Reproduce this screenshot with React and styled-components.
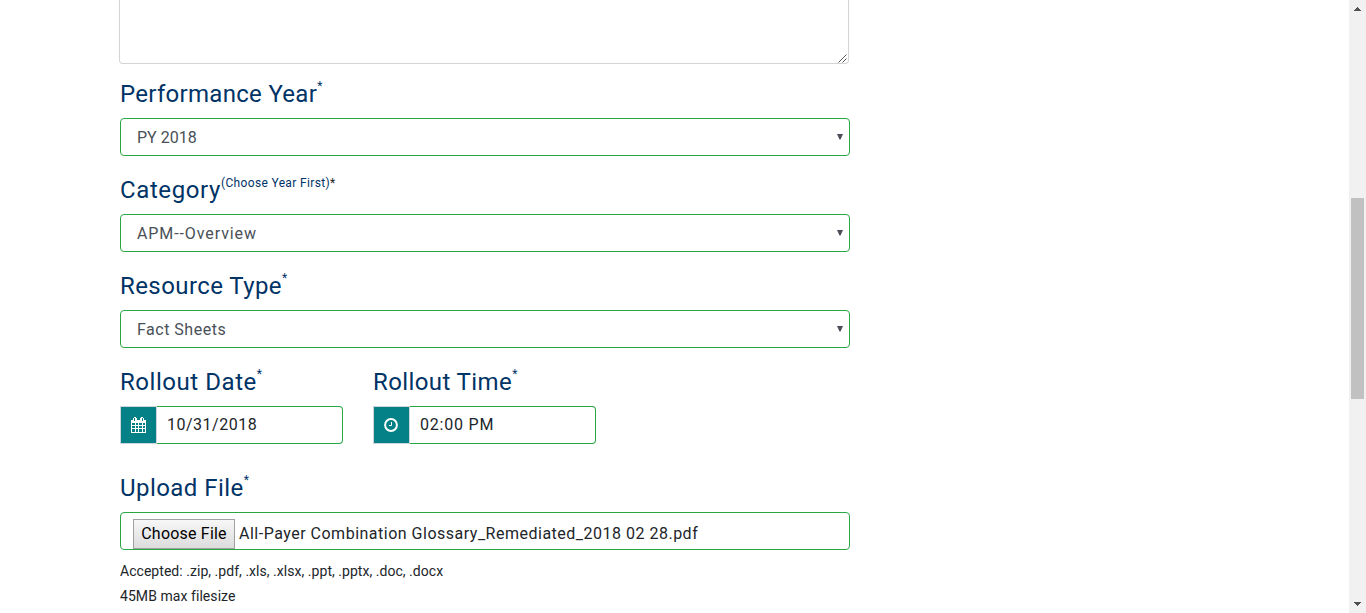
import React from "react";
import styled, { createGlobalStyle } from "styled-components";

const Global = createGlobalStyle`
  * { box-sizing: border-box; }
  html, body { margin: 0; background: #fff; overflow: hidden; }
  body { font-family: Roboto, "Liberation Sans", sans-serif; color: #212529; }
`;
const Page = styled.div`display: flex; height: 613px; overflow: hidden;`;
const Main = styled.main`flex: 1; padding-left: 120px;`;
const Form = styled.form`width: 730px;`;
const TextArea = styled.div`
  width: 730px; height: 64px; margin: 0 0 12px -1px;
  display: flex; justify-content: flex-end; align-items: flex-end;
  border: 1px solid #d4d4d6; border-top: 0; border-radius: 0 0 4px 4px;
  svg { display: block; margin: 0 1px 0 0; }
`;
const Group = styled.div`
  width: ${p => p.$w || "100%"}; margin-bottom: ${p => p.$gap ?? 16}px;
`;
const Label = styled.label`
  display: flex; height: 42px; line-height: 36px; font-size: 24px;
  color: #003366; white-space: nowrap;
`;
const Txt = styled.span`letter-spacing: ${p => p.$ls || 0}px; white-space: pre;`;
const Sup = styled.sup`
  font-size: 12px; line-height: 12px; margin-top: ${p => p.$top ?? 4}px;
  letter-spacing: ${p => p.$ls || 0}px;
`;
const Required = styled.span`color: #212529;`;
const Field = styled.div`
  display: flex; align-items: center; justify-content: space-between;
  height: 38px; padding: 0 5px 0 16px; border: 1px solid #28a745; border-radius: 4px;
  font-size: 16px; line-height: 36px; color: #495057;
  span { padding-top: 2px; }
  svg { display: block; }
`;
const Row = styled.div`display: flex; gap: 30px;`;
const InputGroup = styled.div`display: flex; height: 38px;`;
const Addon = styled.div`
  width: 37px; display: flex; align-items: center; justify-content: center;
  background: #048186; border: 1px solid #ced4da;
`;
const Input = styled.div`
  flex: 1; padding-left: 10px; border: 1px solid #28a745; border-left: 0;
  border-radius: 0 4px 4px 0; font-size: 16px; line-height: 35px; color: #212529;
`;
const FileField = styled.div`
  display: flex; height: 38px; padding: 6px 12px 0; overflow: hidden;
  border: 1px solid #28a745; border-radius: 4px; font-size: 16px; line-height: 29px;
`;
const FileButton = styled.span`
  display: block; width: 102px; height: 30px; margin-right: 4px; text-align: center;
  border: 1px solid #a0a0a0; background: linear-gradient(#f7f7f7, #dcdcdc);
  color: #000; line-height: 27px;
`;
const Hint = styled.div`
  height: 25px; line-height: 25px; font-size: 14px; white-space: nowrap;
`;
const Hints = styled.div`margin-top: 9px;`;
const Bar = styled.div`
  width: 17px; height: 613px; background: #f1f1f1; display: flex;
  flex-direction: column; align-items: center;
  svg { display: block; margin-top: 7px; }
`;
const Thumb = styled.div`width: 13px; height: 201px; margin: 187px 0 196px; background: #c1c1c1;`;

const Arrow = () => (
  <svg width="8" height="8" viewBox="0 0 8 8"><path d="M1 1h6L4.5 6.5h-1z" fill="#495057" /></svg>
);
const Calendar = () => (
  <svg width="15" height="16" viewBox="0 0 15 16" shapeRendering="crispEdges">
    <path fill="#fff" fillRule="evenodd" d="M0 3h2V1h1V0h2v1h1v2h3V1h1V0h2v1h1v2h2v13H0zM1 6v2h3V6zM5 6v2h2V6zM8 6v2h3V6zM12 6v2h2V6zM1 9v2h3V9zM5 9v2h2V9zM8 9v2h3V9zM12 9v2h2V9zM1 12v3h3v-3zM5 12v3h2v-3zM8 12v3h3v-3zM12 12v3h2v-3zM3 1v3h1V1zM11 1v3h1V1z" />
  </svg>
);
const Clock = () => (
  <svg width="15" height="14" viewBox="0 0 15 14" fill="none" stroke="#fff">
    <circle cx="7" cy="7" r="5.9" strokeWidth="2" /><path d="M7.5 4v3.5H5" />
  </svg>
);

const Select = ({ label, ls, value, vls, sup = "*", supLs, supTop }) => (
  <Group>
    <Label><Txt $ls={ls}>{label}</Txt><Sup $ls={supLs} $top={supTop}>{sup}</Sup></Label>
    <Field><Txt $ls={vls}>{value}</Txt><Arrow /></Field>
  </Group>
);

export default function App() {
  return (
    <Page>
      <Global />
      <Main>
        <Form>
          <TextArea>
            <svg width="9" height="9" viewBox="0 0 9 9" stroke="#555" fill="none"><path d="M.5 8.5l8-8M4.5 8.5l4-4" /></svg>
          </TextArea>
          <Select label="Performance Year" ls={0.3} value="PY 2018" vls={0} />
          <Select label="Category" ls={0.6} value="APM--Overview" vls={0.9} sup={<>(Choose Year First)<Required>*</Required></>} supLs={0.35} supTop={5} />
          <Select label="Resource Type" ls={0.42} value="Fact Sheets" vls={0.5} />
          <Row>
            <Group $w="223px" $gap={26}>
              <Label><Txt $ls={0.55}>Rollout Date</Txt><Sup>*</Sup></Label>
              <InputGroup><Addon><Calendar /></Addon><Input><Txt $ls={0.5}>10/31/2018</Txt></Input></InputGroup>
            </Group>
            <Group $w="223px" $gap={26}>
              <Label><Txt $ls={0.4}>Rollout Time</Txt><Sup>*</Sup></Label>
              <InputGroup><Addon><Clock /></Addon><Input><Txt $ls={0.8}>02:00 PM</Txt></Input></InputGroup>
            </Group>
          </Row>
          <Label><Txt $ls={0.45}>Upload File</Txt><Sup>*</Sup></Label>
          <FileField>
            <FileButton><Txt $ls={0.2}>Choose File</Txt></FileButton>
            <Txt $ls={0.5}>All-Payer Combination Glossary_Remediated_2018 02 28.pdf</Txt>
          </FileField>
          <Hints>
            <Hint><Txt $ls={0.04}>Accepted: .zip, .pdf, .xls, .xlsx, .ppt, .pptx, .doc, .docx</Txt></Hint>
            <Hint><Txt $ls={0.06}>45MB max filesize</Txt></Hint>
          </Hints>
        </Form>
      </Main>
      <Bar>
        <svg width="7" height="4" shapeRendering="crispEdges"><path d="M3 0h1v1h1v1h1v1h1v1H0V3h1V2h1V1h1z" fill="#505050" /></svg>
        <Thumb />
        <svg width="7" height="4" shapeRendering="crispEdges"><path d="M0 0h7v1H6v1H5v1H4v1H3V3H2V2H1V1H0z" fill="#505050" /></svg>
      </Bar>
    </Page>
  );
}
